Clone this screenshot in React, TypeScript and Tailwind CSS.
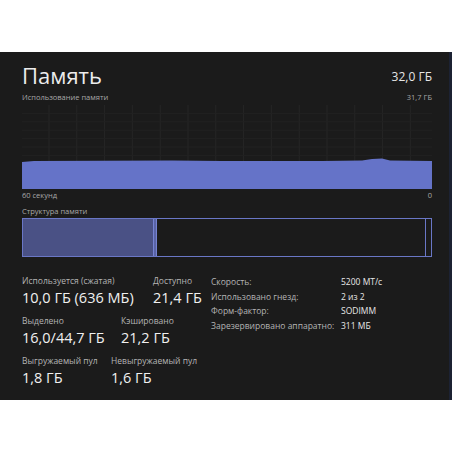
import React from 'react';

const font = { fontFamily: '"Open Sans", "Noto Sans", sans-serif' };

// history graph: faint grid plus the filled usage area
function UsageGraph() {
    const w = 410;
    const h = 84;
    const cols = Array.from({ length: 15 }, (_, i) => 27 + i * 27.8);
    const rows = Array.from({ length: 9 }, (_, i) => (i + 1) * 8.4);
    return (
        <svg width={w} height={h} viewBox={`0 0 ${w} ${h}`} className="block">
            {cols.map((x) => (
                <line key={`c${x}`} x1={x} y1={0} x2={x} y2={h} stroke="#262626" strokeWidth={1} />
            ))}
            {rows.map((y) => (
                <line key={`r${y}`} x1={0} y1={y} x2={w} y2={y} stroke="#222222" strokeWidth={1} />
            ))}
            <path
                d="M0 57 L12 56 L150 55.5 L200 56 L300 56 L340 55.5 L350 54 L360 53.6 L368 55.5 L410 56 L410 84 L0 84 Z"
                fill="#6573c8"
            />
        </svg>
    );
}

function Stat({ label, value, className = '' }: { label: string; value: string; className?: string }) {
    return (
        <div className={className}>
            <div className="text-[8.5px] leading-[12px] text-[#b4b4b4]">{label}</div>
            <div className="text-[14.5px] leading-[22px] text-[#f0f0f0]">{value}</div>
        </div>
    );
}

const specs = [
    ['Скорость:', '5200 MT/с'],
    ['Использовано гнезд:', '2 из 2'],
    ['Форм-фактор:', 'SODIMM'],
    ['Зарезервировано аппаратно:', '311 МБ'],
];

export default function App() {
    return (
        <div className="w-[452px] h-[452px] bg-white flex flex-col" style={font}>
            <div className="h-[52px] shrink-0" />
            <div className="h-[348px] shrink-0 bg-[#1b1b1b] border-r-[3px] border-[#1c2233] pl-[22px] pr-[17px] pt-[8px]">
                {/* header */}
                <div className="flex items-end justify-between">
                    <h1 className="text-[22px] leading-[30px] text-[#ececec]">Память</h1>
                    <span className="text-[12px] leading-[22px] text-[#e6e6e6] mb-[2px]">32,0 ГБ</span>
                </div>
                <div className="flex justify-between text-[7.5px] leading-[12px] text-[#a8a8a8] mt-[1px]">
                    <span>Использование памяти</span>
                    <span>31,7 ГБ</span>
                </div>
                <div className="mt-[2px]">
                    <UsageGraph />
                </div>
                <div className="flex justify-between text-[7.5px] leading-[12px] text-[#a8a8a8]">
                    <span>60 секунд</span>
                    <span>0</span>
                </div>
                <div className="text-[7.5px] leading-[12px] text-[#a8a8a8] mt-[4px]">Структура памяти</div>

                {/* composition bar */}
                <div className="mt-[1px] h-[39px] border border-[#6a77c6] flex">
                    <div className="w-[130px] bg-[#4a5185]" />
                    <div className="w-[4px] bg-[#5a64a6] border-x border-[#7683d2]" />
                    <div className="flex-1 border-r border-[#6a77c6]" />
                    <div className="w-[5px]" />
                </div>

                {/* stats */}
                <div className="flex mt-[18px]">
                    <div className="w-[189px] shrink-0">
                        <div className="flex">
                            <Stat label="Используется (сжатая)" value="10,0 ГБ (636 МБ)" className="w-[131px]" />
                            <Stat label="Доступно" value="21,4 ГБ" />
                        </div>
                        <div className="flex mt-[6px]">
                            <Stat label="Выделено" value="16,0/44,7 ГБ" className="w-[99px]" />
                            <Stat label="Кэшировано" value="21,2 ГБ" />
                        </div>
                        <div className="flex mt-[6px]">
                            <Stat label="Выгружаемый пул" value="1,8 ГБ" className="w-[89px]" />
                            <Stat label="Невыгружаемый пул" value="1,6 ГБ" />
                        </div>
                    </div>
                    <div className="flex flex-col text-[8.5px] leading-[14.5px]">
                        {specs.map(([k, v]) => (
                            <div key={k} className="flex">
                                <span className="w-[130px] text-[#b4b4b4]">{k}</span>
                                <span className="text-[#e8e8e8]">{v}</span>
                            </div>
                        ))}
                    </div>
                </div>
            </div>
        </div>
    );
}
